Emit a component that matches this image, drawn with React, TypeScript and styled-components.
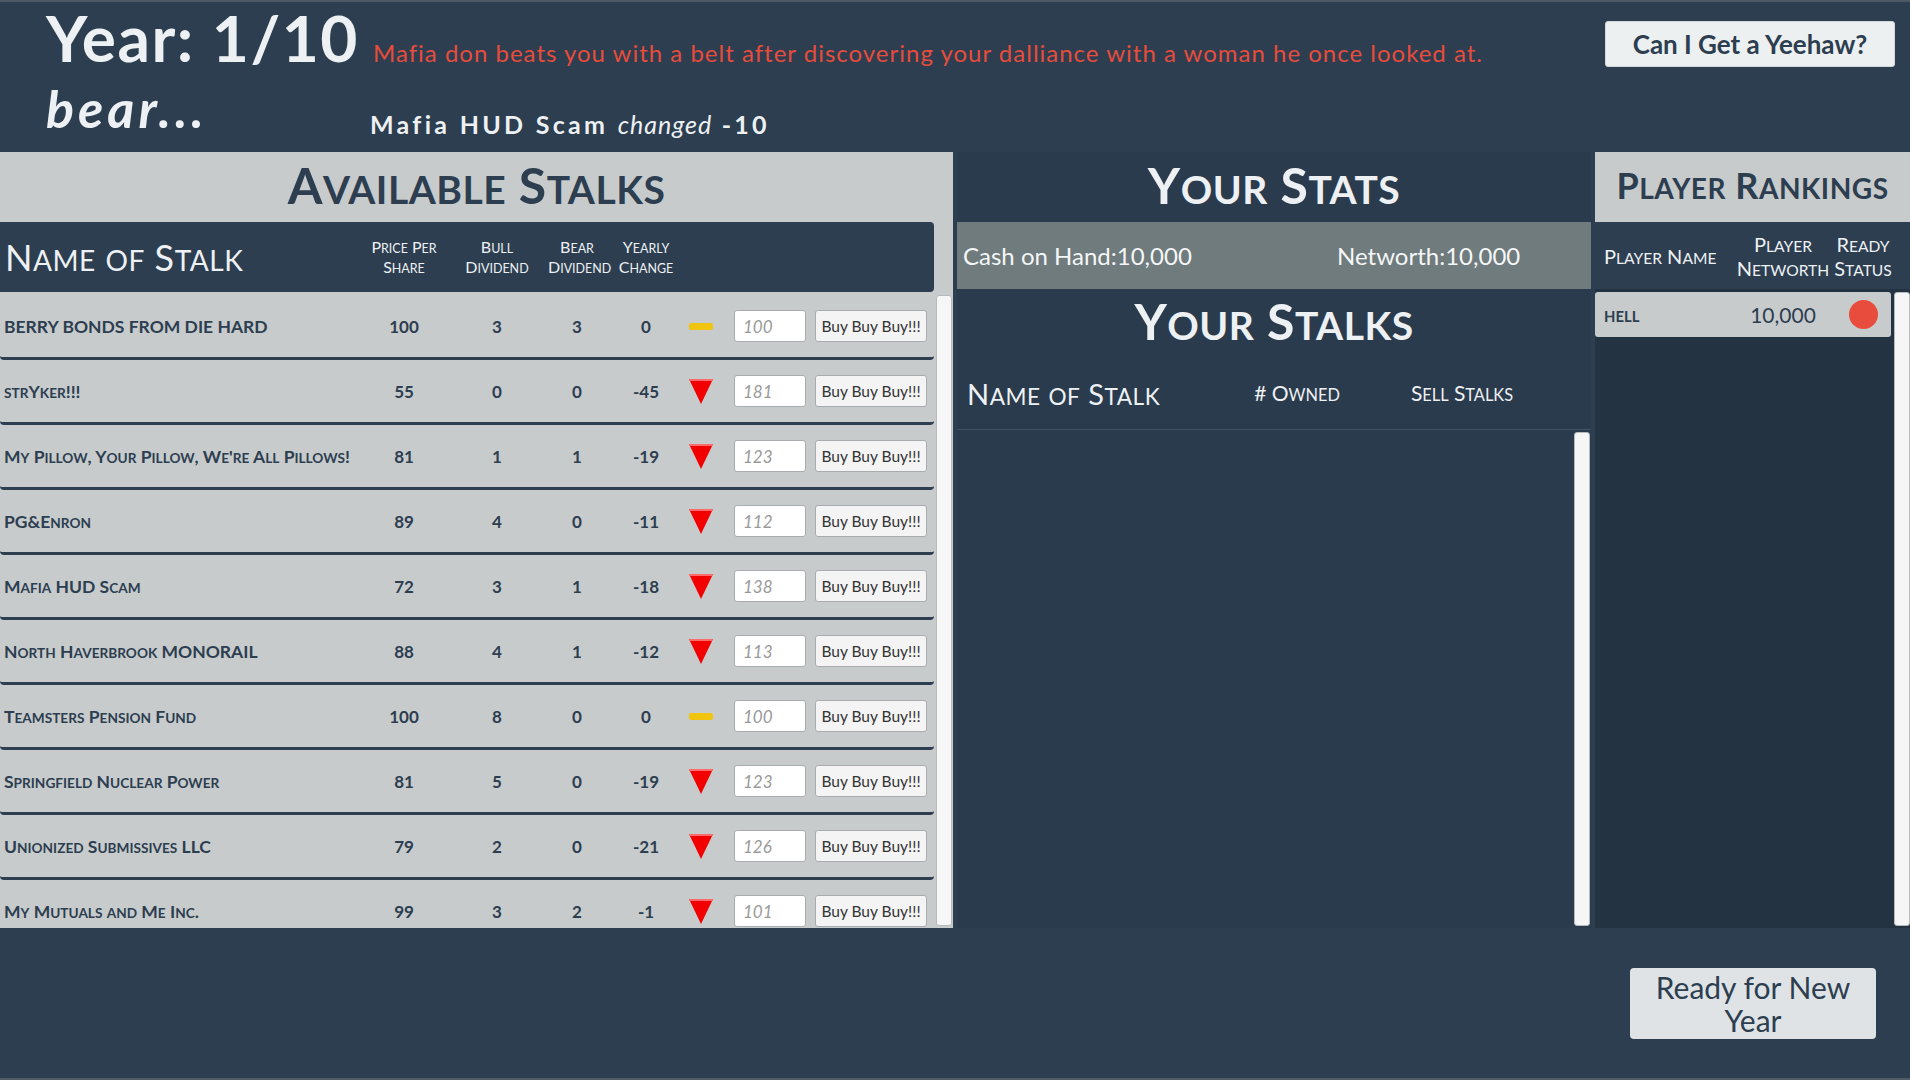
import styled, { createGlobalStyle } from 'styled-components'

const colors = {
  navy: '#2c3e50',
  navyPanel: '#2a3b4d',
  navyDeep: '#243342',
  silver: '#c8cbcc',
  slate: '#6f7b7c',
  alert: '#e74c3c',
  down: '#f20000',
  flat: '#f1c40f',
  paper: '#eef1f3'
}

const GlobalStyle = createGlobalStyle`
  html, body {
    margin: 0;
    padding: 0;
    background: ${colors.navy};
  }
  body {
    font-family: Lato, 'Noto Sans', 'DejaVu Sans', sans-serif;
    overflow: hidden;
  }
  * {
    box-sizing: border-box;
  }
`

// lowercase letters drawn as smaller capitals, the way the game's font does it
const Lower = styled.span`
  font-size: 0.78em;
  text-transform: uppercase;
`

const SmallCaps = ({ text }: { text: string }) => (
  <span>
    {text.split(/([a-z]+)/).map((part, i) =>
      /^[a-z]+$/.test(part) ? <Lower key={i}>{part}</Lower> : part
    )}
  </span>
)

const Page = styled.div`
  width: 1910px;
  height: 1080px;
  display: flex;
  flex-direction: column;
  background: ${colors.navy};
`

const TopBar = styled.header`
  height: 152px;
  flex: 0 0 152px;
  display: flex;
  justify-content: space-between;
  padding: 0 15px 0 46px;
  border-top: 2px solid #4b5866;
`

const Headlines = styled.div`
  display: flex;
  flex-direction: column;
`

const YearLine = styled.div`
  display: flex;
  align-items: baseline;
  gap: 14px;
  padding-top: 4px;
`

const YearText = styled.h1`
  margin: 0;
  font-size: 64px;
  line-height: 64px;
  font-weight: 700;
  letter-spacing: 1.5px;
  color: ${colors.paper};
`

const EventText = styled.span`
  font-size: 24px;
  line-height: 1;
  letter-spacing: 1px;
  color: ${colors.alert};
`

const MoodLine = styled.div`
  display: flex;
  align-items: flex-end;
  margin-top: 12px;
`

const MoodText = styled.span`
  flex: 0 0 324px;
  font-size: 52px;
  line-height: 52px;
  font-weight: 700;
  font-style: italic;
  letter-spacing: 4px;
  color: ${colors.paper};
`

const ChangeText = styled.span`
  margin-bottom: -3px;
  font-size: 25px;
  line-height: 25px;
  font-weight: 700;
  letter-spacing: 3.3px;
  color: ${colors.paper};
  em {
    font-weight: 400;
    letter-spacing: 1px;
  }
`

const YeehawButton = styled.button`
  margin-top: 19px;
  width: 290px;
  height: 46px;
  background: #ecf0f1;
  border: 1px solid #d5d9db;
  border-radius: 3px;
  font-family: inherit;
  font-size: 26px;
  font-weight: 700;
  color: ${colors.navy};
  padding: 0;
`

const Board = styled.main`
  flex: 0 0 776px;
  display: grid;
  grid-template-columns: 953px 634px 315px;
  column-gap: 4px;
  min-height: 0;
`

const Panel = styled.section<{ $bg: string }>`
  display: flex;
  flex-direction: column;
  background: ${({ $bg }) => $bg};
  min-height: 0;
  overflow: hidden;
`

const PanelTitle = styled.h2<{ $light?: boolean; $size?: number; $bg?: string; $height?: number }>`
  margin: 0;
  flex: 0 0 ${({ $height }) => $height ?? 70}px;
  display: flex;
  align-items: center;
  justify-content: center;
  padding-bottom: 4px;
  font-size: ${({ $size }) => $size ?? 50}px;
  font-weight: 700;
  letter-spacing: 0.5px;
  white-space: nowrap;
  color: ${({ $light }) => ($light ? colors.paper : colors.navy)};
  background: ${({ $bg }) => $bg ?? 'transparent'};
`

const stalkColumns = '362px 84px 102px 58px 80px 30px 90px 121px'

const StalkHeader = styled.div`
  flex: 0 0 70px;
  margin-right: 19px;
  display: grid;
  grid-template-columns: ${stalkColumns};
  align-items: center;
  background: ${colors.navy};
  border-radius: 0 4px 4px 0;
  color: ${colors.paper};
`

const HeaderName = styled.span<{ $size: number; $indent?: number }>`
  padding-left: ${({ $indent }) => $indent ?? 5}px;
  font-size: ${({ $size }) => $size}px;
  letter-spacing: 0.5px;
  white-space: nowrap;
`

const HeaderLabel = styled.span<{ $size?: number; $align?: string }>`
  font-size: ${({ $size }) => $size ?? 16}px;
  line-height: 1.2;
  text-align: ${({ $align }) => $align ?? 'center'};
  white-space: nowrap;
`

// a list with the page's own always-visible scroll rail beside it
const ListFrame = styled.div<{ $bg?: string }>`
  flex: 1;
  min-height: 0;
  display: flex;
  background: ${({ $bg }) => $bg ?? 'transparent'};
`

const ListBody = styled.div<{ $gapRight?: number }>`
  flex: 1;
  min-width: 0;
  overflow: hidden;
  padding-top: 3px;
  padding-right: ${({ $gapRight }) => $gapRight ?? 0}px;
`

const ScrollRail = styled.div<{ $top?: number; $right?: number }>`
  flex: 0 0 16px;
  margin: ${({ $top }) => $top ?? 3}px ${({ $right }) => $right ?? 1}px 2px 0;
  background: #f6f6f6;
  border: 1px solid #b6babc;
  border-radius: 3px;
`

const StalkRow = styled.div`
  height: 65px;
  display: grid;
  grid-template-columns: ${stalkColumns};
  align-items: center;
  background: ${colors.silver};
  border-bottom: 3px solid ${colors.navy};
  border-radius: 4px;
  color: ${colors.navy};
`

const StalkName = styled.span`
  padding-left: 4px;
  font-size: 17.5px;
  font-weight: 700;
  white-space: nowrap;
`

const NumCell = styled.span<{ $size?: number; $weight?: number }>`
  font-size: ${({ $size }) => $size ?? 17}px;
  font-weight: ${({ $weight }) => $weight ?? 700};
  text-align: center;
`

const TrendCell = styled.span`
  display: flex;
  justify-content: center;
  align-items: center;
`

const FlatMark = styled.span`
  width: 24px;
  height: 7px;
  border-radius: 2px;
  background: ${colors.flat};
`

const QtyInput = styled.input`
  justify-self: end;
  width: 72px;
  height: 32px;
  padding: 0 8px;
  border: 1px solid #a9acae;
  border-radius: 3px;
  background: #fff;
  font-family: inherit;
  font-size: 17px;
  font-style: italic;
  &::placeholder {
    color: #9a9a9a;
  }
`

const BuyButton = styled.button`
  justify-self: end;
  width: 112px;
  height: 32px;
  padding: 0;
  border: 1px solid #a9acae;
  border-radius: 3px;
  background: #f4f4f4;
  font-family: inherit;
  font-size: 15.5px;
  color: #333;
`

const StatsBar = styled.div`
  flex: 0 0 67px;
  display: grid;
  grid-template-columns: 374px auto;
  align-items: center;
  padding-left: 6px;
  background: ${colors.slate};
  font-size: 24px;
  color: #f4f6f7;
`

const HoldingsHeader = styled.div`
  flex: 0 0 73px;
  display: grid;
  grid-template-columns: 275px 120px 210px;
  align-items: center;
  padding-left: 5px;
  border-bottom: 1px solid rgba(255, 255, 255, 0.12);
  color: ${colors.paper};
`

const rankColumns = '131px 96px 64px'

const RankHeader = styled.div`
  flex: 0 0 67px;
  display: grid;
  grid-template-columns: ${rankColumns};
  align-items: center;
  padding-left: 9px;
  background: ${colors.navy};
  color: ${colors.paper};
`

const RankRow = styled.div`
  height: 45px;
  display: grid;
  grid-template-columns: ${rankColumns};
  align-items: center;
  padding-left: 9px;
  background: ${colors.silver};
  border-radius: 3px;
  color: ${colors.navy};
`

const PlayerName = styled.span`
  font-size: 19px;
  font-weight: 700;
`

const ReadyDot = styled.span<{ $ready: boolean }>`
  justify-self: center;
  width: 29px;
  height: 29px;
  border-radius: 50%;
  background: ${({ $ready }) => ($ready ? '#2ecc71' : colors.alert)};
`

const Footer = styled.footer`
  flex: 1;
  display: flex;
  justify-content: flex-end;
  align-items: flex-start;
  padding: 40px 34px 0 0;
  border-bottom: 2px solid #525c66;
`

const ReadyButton = styled.button`
  width: 246px;
  height: 71px;
  padding: 0;
  border: none;
  border-radius: 4px;
  background: #dfe3e6;
  font-family: inherit;
  font-size: 30px;
  line-height: 1.1;
  color: ${colors.navy};
`

interface Stalk {
  name: string
  price: number
  bull: number
  bear: number
  change: number
  quote: number
}

const stalks: Stalk[] = [
  { name: 'BERRY BONDS FROM DIE HARD', price: 100, bull: 3, bear: 3, change: 0, quote: 100 },
  { name: 'strYker!!!', price: 55, bull: 0, bear: 0, change: -45, quote: 181 },
  { name: "My Pillow, Your Pillow, We're All Pillows!", price: 81, bull: 1, bear: 1, change: -19, quote: 123 },
  { name: 'PG&Enron', price: 89, bull: 4, bear: 0, change: -11, quote: 112 },
  { name: 'Mafia HUD Scam', price: 72, bull: 3, bear: 1, change: -18, quote: 138 },
  { name: 'North Haverbrook MONORAIL', price: 88, bull: 4, bear: 1, change: -12, quote: 113 },
  { name: 'Teamsters Pension Fund', price: 100, bull: 8, bear: 0, change: 0, quote: 100 },
  { name: 'Springfield Nuclear Power', price: 81, bull: 5, bear: 0, change: -19, quote: 123 },
  { name: 'Unionized Submissives LLC', price: 79, bull: 2, bear: 0, change: -21, quote: 126 },
  { name: 'My Mutuals and Me Inc.', price: 99, bull: 3, bear: 2, change: -1, quote: 101 }
]

const players = [{ name: 'hell', networth: '10,000', ready: false }]

const Trend = ({ change }: { change: number }) => {
  if (change === 0) return <FlatMark />
  return (
    <svg width="24" height="25" viewBox="0 0 24 25">
      <polygon points="0,0 24,0 12,25" fill={colors.down} />
      <polygon points="0,0 24,0 23,2 1,2" fill="#ff6b6b" />
    </svg>
  )
}

const TwoLines = ({ top, bottom }: { top: string; bottom: string }) => (
  <>
    <SmallCaps text={top} />
    <br />
    <SmallCaps text={bottom} />
  </>
)

const App = () => {
  return (
    <Page>
      <GlobalStyle />
      <TopBar>
        <Headlines>
          <YearLine>
            <YearText>Year: 1/10</YearText>
            <EventText>
              Mafia don beats you with a belt after discovering your dalliance with a woman he once looked at.
            </EventText>
          </YearLine>
          <MoodLine>
            <MoodText>bear...</MoodText>
            <ChangeText>
              Mafia HUD Scam <em>changed</em> -10
            </ChangeText>
          </MoodLine>
        </Headlines>
        <YeehawButton>Can I Get a Yeehaw?</YeehawButton>
      </TopBar>

      <Board>
        <Panel $bg={colors.silver}>
          <PanelTitle>
            <SmallCaps text="Available Stalks" />
          </PanelTitle>
          <StalkHeader>
            <HeaderName $size={36}>
              <SmallCaps text="Name of Stalk" />
            </HeaderName>
            <HeaderLabel><TwoLines top="Price Per" bottom="Share" /></HeaderLabel>
            <HeaderLabel><TwoLines top="Bull" bottom="Dividend" /></HeaderLabel>
            <HeaderLabel><TwoLines top="Bear" bottom="Dividend" /></HeaderLabel>
            <HeaderLabel><TwoLines top="Yearly" bottom="Change" /></HeaderLabel>
          </StalkHeader>
          <ListFrame>
            <ListBody $gapRight={2}>
              {stalks.map((s) => (
                <StalkRow key={s.name}>
                  <StalkName>
                    <SmallCaps text={s.name} />
                  </StalkName>
                  <NumCell>{s.price}</NumCell>
                  <NumCell>{s.bull}</NumCell>
                  <NumCell>{s.bear}</NumCell>
                  <NumCell>{s.change}</NumCell>
                  <TrendCell>
                    <Trend change={s.change} />
                  </TrendCell>
                  <QtyInput placeholder={String(s.quote)} />
                  <BuyButton>Buy Buy Buy!!!</BuyButton>
                </StalkRow>
              ))}
            </ListBody>
            <ScrollRail />
          </ListFrame>
        </Panel>

        <Panel $bg={colors.navyPanel}>
          <PanelTitle $light>
            <SmallCaps text="Your Stats" />
          </PanelTitle>
          <StatsBar>
            <span>Cash on Hand:10,000</span>
            <span>Networth:10,000</span>
          </StatsBar>
          <PanelTitle $light $height={68}>
            <SmallCaps text="Your Stalks" />
          </PanelTitle>
          <HoldingsHeader>
            <HeaderName $size={29}>
              <SmallCaps text="Name of Stalk" />
            </HeaderName>
            <HeaderLabel $size={21}>
              <SmallCaps text="# Owned" />
            </HeaderLabel>
            <HeaderLabel $size={21}>
              <SmallCaps text="Sell Stalks" />
            </HeaderLabel>
          </HoldingsHeader>
          <ListFrame>
            <ListBody />
            <ScrollRail $top={2} />
          </ListFrame>
        </Panel>

        <Panel $bg={colors.navyDeep}>
          <PanelTitle $size={36} $bg={colors.silver}>
            <SmallCaps text="Player Rankings" />
          </PanelTitle>
          <RankHeader>
            <HeaderLabel $size={20} $align="left">
              <SmallCaps text="Player Name" />
            </HeaderLabel>
            <HeaderLabel $size={20}><TwoLines top="Player" bottom="Networth" /></HeaderLabel>
            <HeaderLabel $size={20}><TwoLines top="Ready" bottom="Status" /></HeaderLabel>
          </RankHeader>
          <ListFrame $bg={colors.navyDeep}>
            <ListBody $gapRight={3}>
              {players.map((p) => (
                <RankRow key={p.name}>
                  <PlayerName>
                    <SmallCaps text={p.name} />
                  </PlayerName>
                  <NumCell $size={21} $weight={400}>{p.networth}</NumCell>
                  <ReadyDot $ready={p.ready} />
                </RankRow>
              ))}
            </ListBody>
            <ScrollRail $right={0} />
          </ListFrame>
        </Panel>
      </Board>

      <Footer>
        <ReadyButton>Ready for New Year</ReadyButton>
      </Footer>
    </Page>
  )
}

export default App
